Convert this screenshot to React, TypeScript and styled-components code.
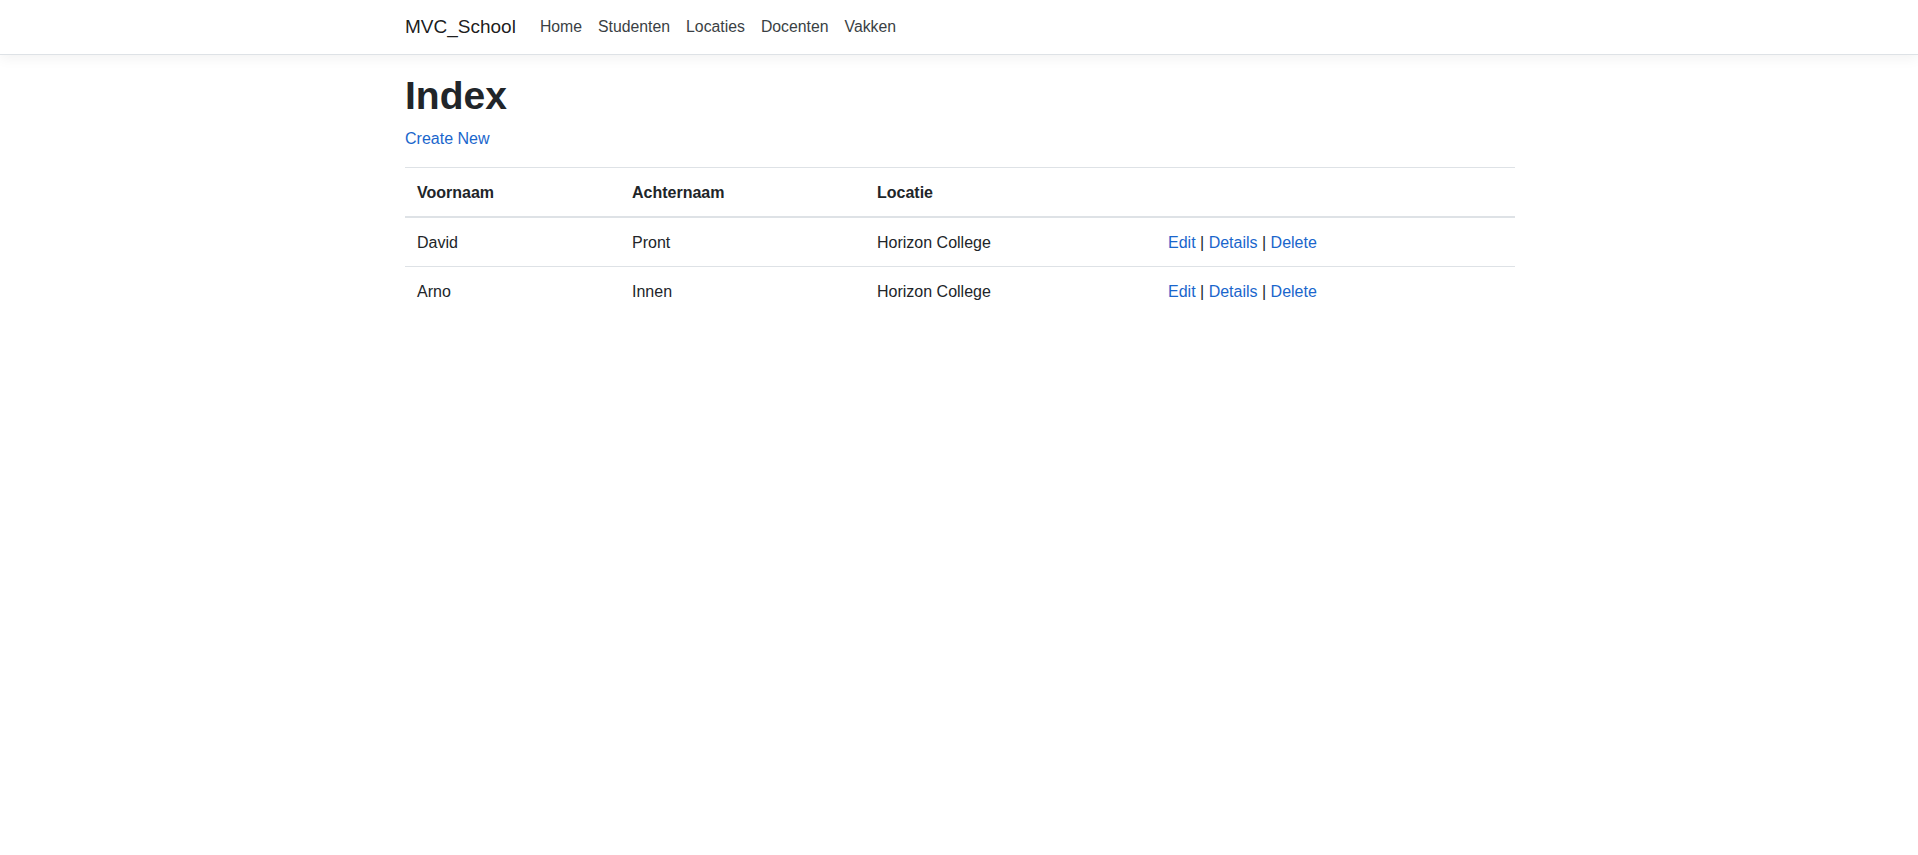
import React from "react";
import styled, { createGlobalStyle } from "styled-components";

const GlobalStyle = createGlobalStyle`
  html { font-size: 16px; }
  body {
    margin: 0;
    font-family: "Liberation Sans", Arial, sans-serif;
    font-size: 16px;
    line-height: 1.5;
    color: #212529;
    background: #fff;
  }
  * { box-sizing: border-box; }
`;

const Header = styled.header`
  background: #fff;
  border-bottom: 1px solid #dee2e6;
  box-shadow: 0 4px 12px rgba(0, 0, 0, 0.05);
  margin-bottom: 16px;
`;

const Container = styled.div`
  max-width: 1140px;
  margin: 0 auto;
  padding: 0 14px 0 16px;
`;

const NavBar = styled(Container)`
  display: flex;
  align-items: center;
  height: 54px;
`;

const Brand = styled.a`
  font-size: 19px;
  line-height: 30px;
  color: rgba(0, 0, 0, 0.9);
  text-decoration: none;
  margin-right: 16px;
`;

const NavList = styled.ul`
  display: flex;
  list-style: none;
  margin: 0;
  padding: 0;
`;

const NavLink = styled.a`
  display: block;
  padding: 8px;
  color: #3a3f44;
  text-decoration: none;
  font-size: 15.8px;
`;

const Main = styled(Container)`
  padding-top: 2px;
`;

const Title = styled.h1`
  font-size: 39px;
  font-weight: 700;
  line-height: 46px;
  margin: 0 0 8px;
  color: #212529;
`;

const Para = styled.p`
  margin: 0 0 16px;
`;

const Link = styled.a`
  color: #1a66cc;
  text-decoration: none;
`;

const Table = styled.table`
  width: 100%;
  border-collapse: collapse;
  margin-bottom: 16px;
  color: #212529;
`;

const Col = styled.col<{ $w?: number }>`
  width: ${(p) => (p.$w ? `${p.$w}px` : "auto")};
`;

const Th = styled.th`
  text-align: left;
  font-weight: 700;
  padding: 13px 12px 11px;
  vertical-align: bottom;
  border-top: 1px solid #dee2e6;
  border-bottom: 2px solid #dee2e6;
`;

const Td = styled.td`
  padding: 13px 12px 11px;
  vertical-align: top;
  border-top: 1px solid #dee2e6;
`;

const rows = [
  { first: "David", last: "Pront", loc: "Horizon College" },
  { first: "Arno", last: "Innen", loc: "Horizon College" },
];

export default function App() {
  return (
    <>
      <GlobalStyle />
      <Header>
        <NavBar as="nav">
          <Brand href="#">MVC_School</Brand>
          <NavList>
            {["Home", "Studenten", "Locaties", "Docenten", "Vakken"].map((n) => (
              <li key={n}>
                <NavLink href="#">{n}</NavLink>
              </li>
            ))}
          </NavList>
        </NavBar>
      </Header>
      <Main as="main">
        <Title>Index</Title>
        <Para>
          <Link href="#">Create New</Link>
        </Para>
        <Table>
          <colgroup>
            <Col $w={215} />
            <Col $w={245} />
            <Col $w={291} />
            <Col />
          </colgroup>
          <thead>
            <tr>
              <Th>Voornaam</Th>
              <Th>Achternaam</Th>
              <Th>Locatie</Th>
              <Th />
            </tr>
          </thead>
          <tbody>
            {rows.map((r) => (
              <tr key={r.first}>
                <Td>{r.first}</Td>
                <Td>{r.last}</Td>
                <Td>{r.loc}</Td>
                <Td>
                  <Link href="#">Edit</Link> | <Link href="#">Details</Link> |{" "}
                  <Link href="#">Delete</Link>
                </Td>
              </tr>
            ))}
          </tbody>
        </Table>
      </Main>
    </>
  );
}
